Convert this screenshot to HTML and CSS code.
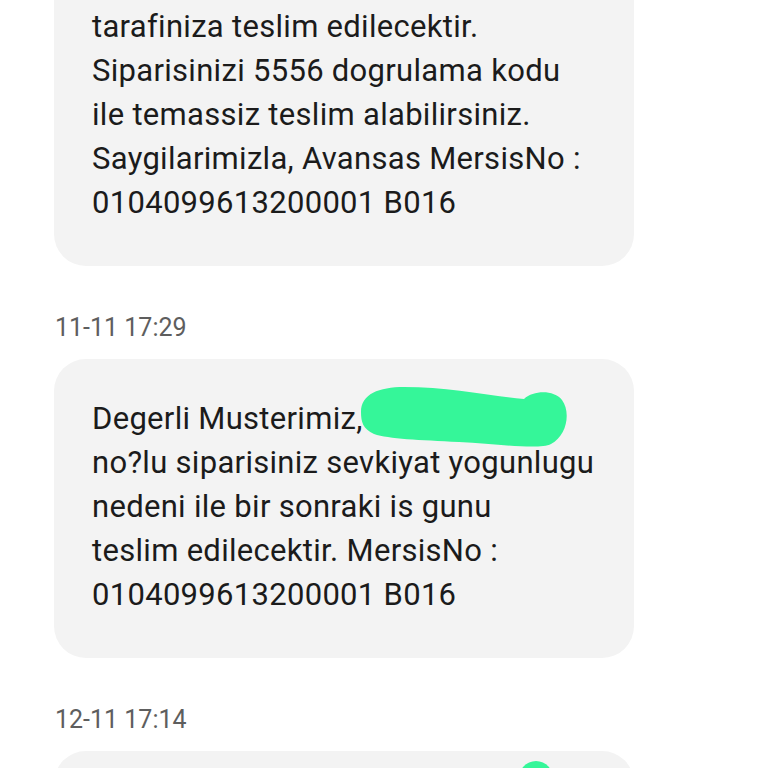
FILE: index.html
```
<!DOCTYPE html>
<html lang="tr">
<head>
    <meta charset="UTF-8">
    <meta name="viewport" content="width=device-width, initial-scale=1.0">
    <title>Mesajlar</title>
    <link rel="stylesheet" href="styles.css">
</head>
<body>
    <div id="thread">
        <div class="bubble bubble-cut">
            tarafiniza teslim edilecektir.<br>
            Siparisinizi 5556 dogrulama kodu<br>
            ile temassiz teslim alabilirsiniz.<br>
            Saygilarimizla, Avansas MersisNo :<br>
            0104099613200001 B016
        </div>

        <p class="stamp">11-11 17:29</p>

        <div class="bubble">
            Degerli Musterimiz,<span class="redact"><svg width="210" height="66" viewBox="0 0 210 66"><path d="M 2 28 C 2 10, 20 3, 45 3 C 90 3, 130 12, 165 15 C 175 6, 195 6, 203 16 C 212 28, 208 52, 192 60 C 180 66, 140 60, 100 58 C 60 56, 30 55, 15 50 C 4 45, 2 38, 2 28 Z" fill="#35f699"/></svg></span><br>
            no?lu siparisiniz sevkiyat yogunlugu<br>
            nedeni ile bir sonraki is gunu<br>
            teslim edilecektir. MersisNo :<br>
            0104099613200001 B016
        </div>

        <p class="stamp">12-11 17:14</p>

        <div class="bubble bubble-last">
            <span class="blot"></span>
        </div>
    </div>
</body>
</html>
```

FILE: styles.css
```
/* General Styling */
body {
    font-family: Roboto, 'Noto Sans', sans-serif;
    background-color: #ffffff;
    color: #1b1b1b;
    margin: 0;
    padding: 0;
    overflow: hidden;
}

/* Message list */
#thread {
    display: flex;
    flex-direction: column;
    align-items: flex-start;
    padding: 0 134px 0 54px;
}

/* Message bubbles */
.bubble {
    position: relative;
    box-sizing: border-box;
    width: 580px;
    background-color: #f3f3f3;
    border-radius: 32px;
    padding: 38px 38px 41px;
    font-size: 31px;
    line-height: 44px;
    letter-spacing: 0.3px;
}

/* First bubble is scrolled off the top */
.bubble-cut {
    border-top-left-radius: 0;
    border-top-right-radius: 0;
    padding-top: 5px;
}

/* Last bubble runs past the bottom */
.bubble-last {
    min-height: 120px;
}

/* Timestamps */
.stamp {
    margin: 47px 0 16px 1px;
    font-size: 25px;
    line-height: 30px;
    color: #5e5e5e;
}

/* Green scribble over the name */
.redact {
    position: relative;
    display: inline-block;
    width: 204px;
    height: 44px;
    vertical-align: top;
}

.redact svg {
    position: absolute;
    top: -13px;
    left: -4px;
}

.blot {
    position: absolute;
    top: 10px;
    left: 464px;
    width: 36px;
    height: 40px;
    border-radius: 50%;
    background-color: #35f699;
}
```
